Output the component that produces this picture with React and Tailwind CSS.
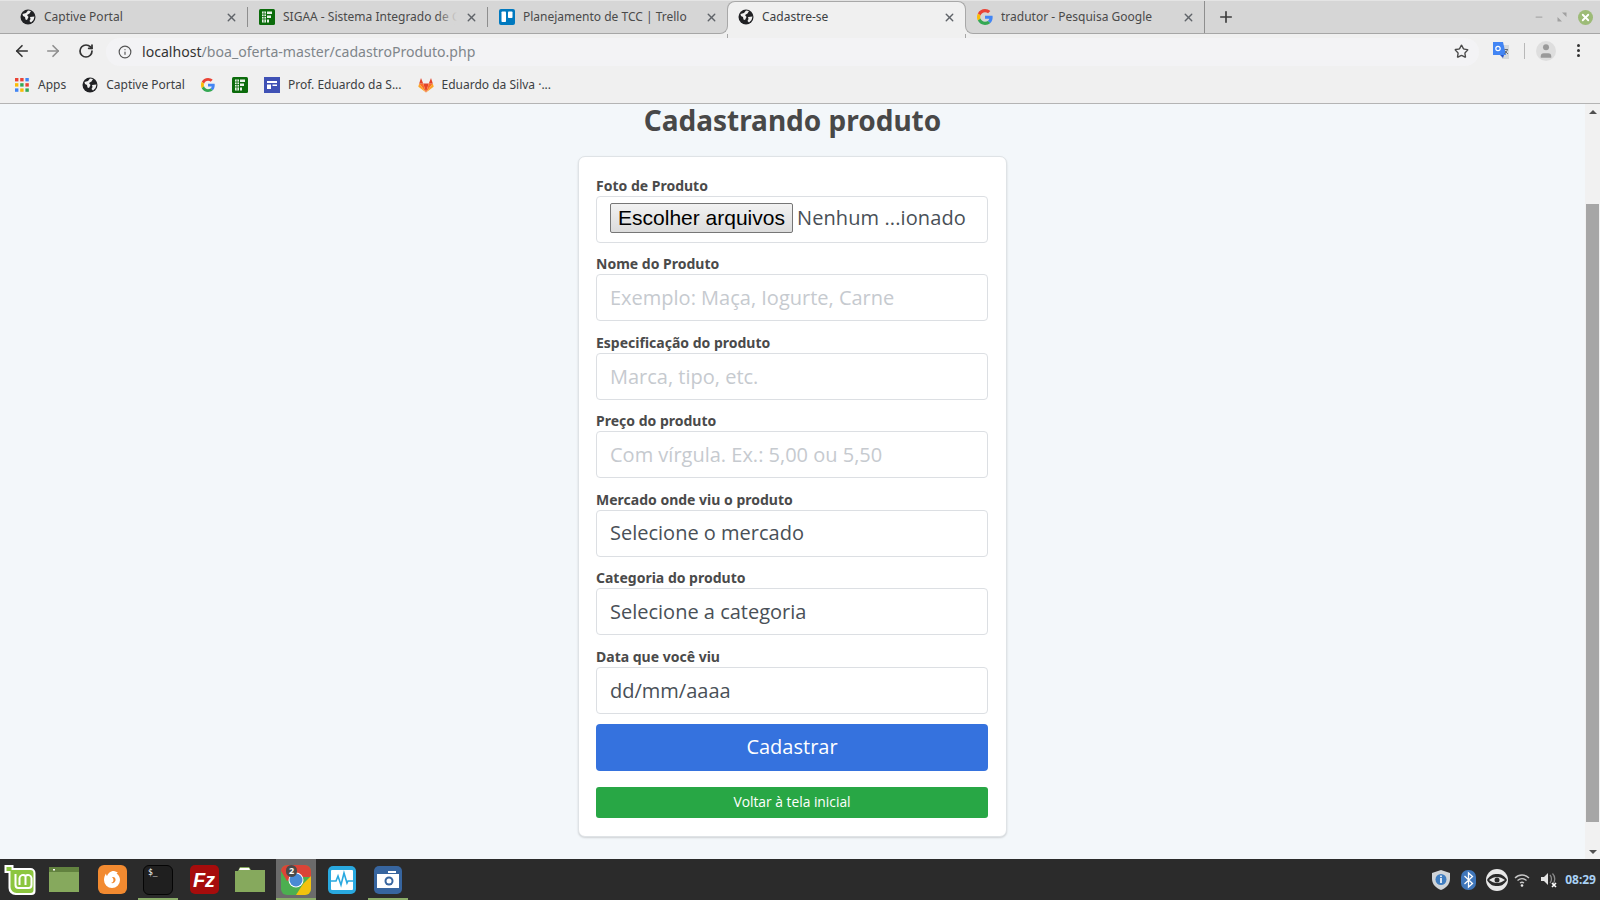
import { ArrowLeft, ArrowRight, RotateCw, Info, Star, Plus, X, Minus, User } from 'lucide-react';

const UI_FONT = 'font-["Noto_Sans",sans-serif]';

const GlobeIcon = () => (
    <svg width="16" height="16" viewBox="0 0 16 16" className="shrink-0">
        <circle cx="8" cy="8" r="7.5" fill="#202124" />
        <path d="M2.5 5 L6 4 L8 1.5 L11 2 L9.5 4.5 L7 6 L8.5 8 L7 11 L5.5 10.5 L5 8 L3 7 Z" fill="#f0f0f0" />
        <path d="M10 8 L14.5 7.5 L13.5 11 L11 13.5 L9.5 12 L10.5 10 Z" fill="#f0f0f0" />
    </svg>
);

const GoogleIcon = ({ size = 16 }) => (
    <svg width={size} height={size} viewBox="0 0 48 48" className="shrink-0">
        <path fill="#EA4335" d="M24 9.5c3.54 0 6.71 1.22 9.21 3.6l6.85-6.85C35.9 2.38 30.47 0 24 0 14.62 0 6.51 5.38 2.56 13.22l7.98 6.19C12.43 13.72 17.74 9.5 24 9.5z" />
        <path fill="#4285F4" d="M46.98 24.55c0-1.57-.15-3.09-.38-4.55H24v9.02h12.94c-.58 2.96-2.26 5.48-4.78 7.18l7.73 6c4.51-4.18 7.09-10.36 7.09-17.65z" />
        <path fill="#FBBC05" d="M10.53 28.59c-.48-1.45-.76-2.99-.76-4.59s.27-3.14.76-4.59l-7.98-6.19C.92 16.46 0 20.12 0 24c0 3.88.92 7.54 2.56 10.78l7.97-6.19z" />
        <path fill="#34A853" d="M24 48c6.48 0 11.93-2.13 16.08-5.81l-7.73-6c-2.15 1.45-4.92 2.3-8.35 2.3-6.26 0-11.57-4.22-13.47-9.91l-7.98 6.19C6.51 42.62 14.62 48 24 48z" />
    </svg>
);

const SigaaIcon = () => (
    <svg width="16" height="16" viewBox="0 0 16 16" className="shrink-0">
        <rect width="16" height="16" rx="1.5" fill="#0b6b0b" />
        <path d="M3 2.5h4v11H3zM8 2.5h5v2.5H8zM8 6.5h4v2.5H8zM8 10.5h2v3H8z" fill="#e8f2e8" />
        <path d="M3 5h4M3 7.5h4M3 10h4M5 2.5v11" stroke="#0b6b0b" strokeWidth="0.8" />
    </svg>
);

const TrelloIcon = () => (
    <svg width="16" height="16" viewBox="0 0 16 16" className="shrink-0">
        <rect width="16" height="16" rx="2" fill="#0079bf" />
        <rect x="2.5" y="2.5" width="4.5" height="10.5" rx="0.8" fill="#fff" />
        <rect x="9" y="2.5" width="4.5" height="6.5" rx="0.8" fill="#fff" />
    </svg>
);

const AppsIcon = () => (
    <svg width="14" height="14" viewBox="0 0 14 14" className="shrink-0">
        {[['#ea4335', '#ea4335', '#4285f4'], ['#fbbc05', '#34a853', '#ea4335'], ['#4285f4', '#fbbc05', '#34a853']].map((row, y) =>
            row.map((c, x) => <rect key={`${x}-${y}`} x={x * 5.2} y={y * 5.2} width="3.4" height="3.4" fill={c} />)
        )}
    </svg>
);

const ProfIcon = () => (
    <svg width="16" height="16" viewBox="0 0 16 16" className="shrink-0">
        <rect width="16" height="16" fill="#3f51b5" />
        <path d="M3 4h10v2H3zM3 7.5h4V12H3zM8.5 7.500H13V9H8.500z" fill="#fff" />
    </svg>
);

const GitlabIcon = () => (
    <svg width="16" height="16" viewBox="0 0 16 16" className="shrink-0">
        <path d="M8 15.5 L5.2 6.5 H10.8 Z" fill="#e24329" />
        <path d="M8 15.5 L5.2 6.5 H1.2 Z" fill="#fc6d26" />
        <path d="M8 15.5 L10.8 6.5 H14.8 Z" fill="#fc6d26" />
        <path d="M1.2 6.5 L0.4 9.2 C0.3 9.6 0.4 9.9 0.7 10.1 L8 15.5 Z" fill="#fca326" />
        <path d="M14.8 6.5 L15.6 9.2 C15.7 9.6 15.6 9.9 15.3 10.1 L8 15.5 Z" fill="#fca326" />
        <path d="M1.2 6.5 L3 1 L5.2 6.5 Z" fill="#e24329" />
        <path d="M14.8 6.5 L13 1 L10.8 6.5 Z" fill="#e24329" />
    </svg>
);

const tabs = [
    { title: 'Captive Portal', icon: <GlobeIcon /> },
    { title: 'SIGAA - Sistema Integrado de G', icon: <SigaaIcon />, fade: true },
    { title: 'Planejamento de TCC | Trello', icon: <TrelloIcon /> },
    { title: 'Cadastre-se', icon: <GlobeIcon />, active: true },
    { title: 'tradutor - Pesquisa Google', icon: <GoogleIcon /> },
];

function Tab({ tab, last, first }) {
    if (tab.active) {
        return (
            <div className="relative w-[239px] h-[37px] -mb-[4px] flex items-center pl-[10px] pr-[9px] bg-[#f0f0f0] border border-b-0 border-[#a8a8a8] rounded-t-lg z-10">
                <div className="absolute -left-[8px] bottom-[4px] w-[8px] h-[8px] bg-[#f0f0f0]">
                    <div className="w-full h-full bg-[#d6d6d6] border-r border-b border-[#a8a8a8] rounded-br-lg" />
                </div>
                <div className="absolute -right-[8px] bottom-[4px] w-[8px] h-[8px] bg-[#f0f0f0]">
                    <div className="w-full h-full bg-[#d6d6d6] border-l border-b border-[#a8a8a8] rounded-bl-lg" />
                </div>
                <div className="-mt-[5px] flex items-center gap-[8px] w-full">
                    {tab.icon}
                    <span className="flex-1 text-xs text-[#3c4043] truncate">{tab.title}</span>
                    <X size={13} strokeWidth={2.5} className="text-[#5f6368]" />
                </div>
            </div>
        );
    }
    return (
        <div className={`relative w-[239px] h-[32px] flex items-center ${first ? 'pl-[12px]' : 'pl-[11px]'} pr-[9px] gap-[8px] ${last ? 'border-r' : ''} border-[#8e8e8e]`}>
            {tab.icon}
            <div className="relative flex-1 min-w-0 overflow-hidden">
                <span className="block text-xs text-[#4a4a4a] whitespace-nowrap">{tab.title}</span>
                {tab.fade && <div className="absolute right-0 top-0 bottom-0 w-[20px] bg-gradient-to-r from-transparent to-[#d6d6d6]" />}
            </div>
            <X size={13} strokeWidth={2.5} className="text-[#5f6368] shrink-0" />
        </div>
    );
}

function TabStrip() {
    return (
        <div className="h-[34px] shrink-0 bg-[#d6d6d6] border-t border-t-[#e4e4e4] border-b border-b-[#a6a6a6] flex items-center pl-[8px]">
            {tabs.map((tab, i) => (
                <div key={tab.title} className="flex items-center">
                    <Tab tab={tab} first={i === 0} last={i === 4} />
                    {i < 2 && <div className="w-px h-[20px] bg-[#8e8e8e]" />}
                </div>
            ))}
            <Plus size={18} strokeWidth={2.2} className="ml-[12px] text-[#3c3c3c]" />
            <div className="ml-auto flex items-center pr-[7px]">
                <Minus size={10} strokeWidth={3} className="text-[#a9a9a9]" />
                <svg width="10" height="10" viewBox="0 0 10 10" className="ml-[13px]">
                    <path d="M5 0.5h4.5V5zM5 9.5H0.5V5z" fill="#a0a0a0" />
                </svg>
                <div className="ml-[11px] w-[15px] h-[15px] rounded-full bg-[#9dbb77] flex items-center justify-center">
                    <X size={11} strokeWidth={4} className="text-white" />
                </div>
            </div>
        </div>
    );
}

function Toolbar() {
    return (
        <div className="h-[33px] shrink-0 bg-[#f0f0f0] flex items-center">
            <ArrowLeft size={18} strokeWidth={2.2} className="ml-[13px] text-[#333]" />
            <ArrowRight size={18} strokeWidth={2.2} className="ml-[13px] text-[#8e8e8e]" />
            <RotateCw size={16} strokeWidth={2.6} className="ml-[16px] text-[#333]" />
            <div className="ml-[12px] w-[1373px] h-[28px] mt-[2px] rounded-full bg-[#f3f3f5] flex items-center pl-[12px] pr-[10px]">
                <Info size={14} strokeWidth={2} className="text-[#555]" />
                <span className="ml-[10px] text-[14.1px] text-[#333]">localhost<span className="text-[#80868b]">/boa_oferta-master/cadastroProduto.php</span></span>
                <Star size={15} strokeWidth={2.2} className="ml-auto text-[#4a4a4a]" />
            </div>
            <svg width="17" height="17" viewBox="0 0 17 17" className="ml-[14px]">
                <path d="M7 3h9v14H9z" fill="#d5d8db" />
                <path d="M0 0h10l3 13H0z" fill="#4285f4" />
                <path d="M7 13l3 3 1-3z" fill="#2a56c6" />
                <circle cx="5" cy="6.5" r="2.2" fill="none" stroke="#fff" strokeWidth="1.2" />
                <path d="M11.5 7.5h3.5M13 7v1M11.5 12l3-4M12 9l3 3" stroke="#5f6368" strokeWidth="0.9" />
            </svg>
            <div className="ml-[14px] w-px h-[16px] bg-[#b8b8b8]" />
            <div className="ml-[11px] w-[20px] h-[20px] rounded-full bg-[#dedede] overflow-hidden flex items-center justify-center text-[#9a9a9a]">
                <User size={18} fill="currentColor" strokeWidth={0} />
            </div>
            <div className="ml-[21px] flex flex-col gap-[2px]">
                <div className="w-[3px] h-[3px] rounded-full bg-[#333]" />
                <div className="w-[3px] h-[3px] rounded-full bg-[#333]" />
                <div className="w-[3px] h-[3px] rounded-full bg-[#333]" />
            </div>
        </div>
    );
}

function Bookmarks() {
    return (
        <div className="h-[37px] shrink-0 bg-[#f0f0f0] border-b border-b-[#b4b4b4] flex items-center pl-[15px] text-xs text-[#3c4043]">
            <AppsIcon />
            <span className="ml-[9px]">Apps</span>
            <div className="ml-[16px]"><GlobeIcon /></div>
            <span className="ml-[8px]">Captive Portal</span>
            <div className="ml-[16px]"><GoogleIcon size={14} /></div>
            <div className="ml-[17px]"><SigaaIcon /></div>
            <div className="ml-[16px]"><ProfIcon /></div>
            <span className="ml-[8px]">Prof. Eduardo da S...</span>
            <div className="ml-[16px]"><GitlabIcon /></div>
            <span className="ml-[8px]">Eduardo da Silva ·...</span>
        </div>
    );
}

const FORM_FONT = 'font-["Open_Sans",sans-serif]';
const inputClass = `block w-full h-[47px] px-[13px] bg-white border border-[#dcdfe3] rounded-[4px] text-[20px] text-[#495057] placeholder:text-[#c6cacf] outline-none appearance-none ${FORM_FONT}`;

function Field({ label, children }) {
    return (
        <div className="mb-[9.6px]">
            <label className="block h-[22px] leading-[24px] text-[14px] font-bold text-[#4a4a4a]">{label}</label>
            {children}
        </div>
    );
}

function ProductForm() {
    return (
        <div className="w-[429px] h-[681px] mt-[14px] bg-white border border-[#dfe3e6] rounded-[7px] shadow-[0_1px_2px_rgba(0,0,0,0.15)] pl-[17px] pr-[18px] pt-[16.5px]">
            <Field label="Foto de Produto">
                <div className={`${inputClass} flex items-center`}>
                    <button className='h-[30px] w-[183px] shrink-0 -mt-[2px] pb-[1px] bg-gradient-to-b from-[#f2f2f2] to-[#dcdcdc] border border-[#767676] rounded-[2px] text-[21px] leading-[24px] text-black font-["Liberation_Sans",sans-serif]'>Escolher arquivos</button>
                    <span className="ml-[4px] -mt-[2px] whitespace-nowrap tracking-[0.1px]">Nenhum ...ionado</span>
                </div>
            </Field>
            <Field label="Nome do Produto">
                <input className={inputClass} placeholder="Exemplo: Maça, Iogurte, Carne" readOnly />
            </Field>
            <Field label="Especificação do produto">
                <input className={inputClass} placeholder="Marca, tipo, etc." readOnly />
            </Field>
            <Field label="Preço do produto">
                <input className={inputClass} placeholder="Com vírgula. Ex.: 5,00 ou 5,50" readOnly />
            </Field>
            <Field label="Mercado onde viu o produto">
                <select className={inputClass}><option>Selecione o mercado</option></select>
            </Field>
            <Field label="Categoria do produto">
                <select className={inputClass}><option>Selecione a categoria</option></select>
            </Field>
            <Field label="Data que você viu">
                <input className={inputClass} value="dd/mm/aaaa" readOnly />
            </Field>
            <button className={`block w-full h-[47px] mt-[1px] bg-[#3572de] rounded-[4px] text-white text-[20px] ${FORM_FONT}`}>Cadastrar</button>
            <button className={`block w-full h-[31px] mt-[16px] bg-[#28a745] rounded-[3px] text-white text-[13.8px] ${FORM_FONT}`}>Voltar à tela inicial</button>
        </div>
    );
}

function Scrollbar() {
    return (
        <div className="w-[15px] shrink-0 bg-[#f1f1f1] flex flex-col items-center">
            <div className="mt-[6px] w-0 h-0 border-x-[4px] border-x-transparent border-b-[4px] border-b-[#505050]" />
            <div className="mt-[90px] w-[13px] h-[618px] bg-[#a6a6a6]" />
            <div className="mt-[28px] w-0 h-0 border-x-[4px] border-x-transparent border-t-[4px] border-t-[#505050]" />
        </div>
    );
}

// icones do painel
const Dock = ({ children, active, running, first, className = '' }) => (
    <div className={`relative h-[41px] flex items-center justify-center ${first ? 'w-[41px] -ml-[3px] justify-start' : 'w-[46px]'} ${className}`}>
        {active && <div className="absolute inset-y-0 left-[3px] right-[3px] bg-[#6b6b6b]" />}
        <div className="relative">{children}</div>
        {running && <div className="absolute bottom-0 left-[3px] right-[3px] h-[2px] bg-[#8aac68]" />}
    </div>
);

function Taskbar() {
    return (
        <div className="h-[41px] shrink-0 bg-[#2b2b2b] flex items-center">
            <div className="flex pl-[3px]">
                <Dock first>
                    <svg width="33" height="30" viewBox="0 0 32 30" className="ml-[4px]">
                        <path d="M0 0h9v3h17a5 5 0 0 1 5 5v18a4 4 0 0 1-4 4H11a7 7 0 0 1-7-7V8H0z" fill="#fff" />
                        <path d="M2 2h5v3h19a3 3 0 0 1 3 3v17a3 3 0 0 1-3 3H12a6 6 0 0 1-6-6V6H2z" fill="#8cc63f" />
                        <path d="M11 9v11a3 3 0 0 0 3 3h10a3 3 0 0 0 3-3v-7a3.500 3.500 0 0 0-6-2 3.500 3.500 0 0 0-6 2v7M21 11v9" fill="none" stroke="#fff" strokeWidth="2" />
                    </svg>
                </Dock>
                <Dock>
                    <svg width="30" height="25" viewBox="0 0 30 25">
                        <rect width="30" height="25" fill="#86a95d" />
                        <rect width="30" height="5" fill="#62823f" />
                        <rect x="4" y="2" width="2" height="1.5" fill="#fff" />
                    </svg>
                </Dock>
                <Dock className="ml-[2px]">
                    <svg width="29" height="29" viewBox="0 0 29 29">
                        <rect width="29" height="29" rx="6" fill="#f28a30" />
                        <path d="M14.500 6c2 0 4 .5 5.500 2-.500 0-1 0-1.500.5 2.500 1.500 3.500 4 3.500 6.500a8 8 0 0 1-16 0c0-3 1-5 2-6.500 0 1 .5 2 1 2.500 1-2.500 3-4.500 5.500-5z" fill="#fff" />
                        <path d="M14 12c2.500-.5 4 1.500 3.500 3.500-.5 2-2.500 3-4.500 2.500 1.500-.5 2.500-1.500 2.500-3 0-1-.5-2-1.500-3z" fill="#f28a30" />
                    </svg>
                </Dock>
                <Dock running>
                    <div className="w-[30px] h-[30px] rounded-[6px] bg-[#1f1f1f] border border-[#050505] pl-[4px] pt-[2px] text-[8px] leading-[10px] text-white font-['DejaVu_Sans_Mono',monospace]">$_</div>
                </Dock>
                <Dock>
                    <div className='w-[29px] h-[29px] rounded-[5px] bg-[#a60c0c] flex items-center justify-center text-white text-[20px] italic font-bold font-["Liberation_Sans",sans-serif]'>Fz</div>
                </Dock>
                <Dock>
                    <svg width="30" height="25" viewBox="0 0 30 25">
                        <path d="M0 4h3l2-4h9l2 3h14v22H0z" fill="#86a95d" />
                        <path d="M5 1h9l1 2H4z" fill="#fff" />
                    </svg>
                </Dock>
                <Dock active running>
                    <svg width="30" height="30" viewBox="0 0 30 30">
                        <rect width="30" height="30" rx="6" fill="#4caf50" />
                        <path d="M0 6a6 6 0 0 1 6-6h18a6 6 0 0 1 6 6v6H15L6 16z" fill="#db4437" />
                        <path d="M30 11v13a6 6 0 0 1-6 6h-9l7-11z" fill="#f4c20d" />
                        <circle cx="15" cy="15" r="7.5" fill="#fff" />
                        <circle cx="15" cy="15" r="6.5" fill="#4a8ad4" />
                    </svg>
                    <div className="absolute left-[5px] top-0 w-[11px] h-[12px] rounded-full bg-[#4a4a4a] text-[9px] leading-[12px] text-center text-white font-bold">2</div>
                </Dock>
                <Dock>
                    <svg width="28" height="28" viewBox="0 0 28 28">
                        <rect width="28" height="28" rx="5" fill="#29a9e0" />
                        <rect x="3" y="4" width="22" height="20" rx="1" fill="#fff" />
                        <path d="M3 15h5l2-5 3 9 3-12 3 10 1-2h5" fill="none" stroke="#29a9e0" strokeWidth="1.6" />
                    </svg>
                </Dock>
                <Dock running>
                    <svg width="28" height="28" viewBox="0 0 28 28">
                        <rect width="28" height="28" rx="5" fill="#37659f" />
                        <rect x="3" y="8" width="22" height="14" fill="#fff" />
                        <rect x="14" y="5" width="8" height="2" fill="#fff" />
                        <circle cx="15" cy="15" r="4.5" fill="#37659f" />
                        <circle cx="15" cy="15" r="2.5" fill="#fff" />
                    </svg>
                </Dock>
            </div>
            <div className="ml-auto flex items-center pr-[4px]">
                <svg width="18" height="20" viewBox="0 0 18 20">
                    <path d="M9 0l9 3v6c0 5-4 9-9 11-5-2-9-6-9-11V3z" fill="#cfd4d8" />
                    <circle cx="9" cy="9.5" r="5.5" fill="#3f7dc0" />
                    <rect x="8.2" y="8" width="1.6" height="5" fill="#fff" />
                    <rect x="8.2" y="5.5" width="1.6" height="1.6" fill="#fff" />
                </svg>
                <svg width="15" height="20" viewBox="0 0 15 20" className="ml-[11px]">
                    <rect width="15" height="20" rx="7" fill="#3f76ba" />
                    <path d="M3.5 6l8 7.5-4 3.5V3l4 3.5-8 7.5" fill="none" stroke="#fff" strokeWidth="1.3" />
                </svg>
                <svg width="22" height="22" viewBox="0 0 22 22" className="ml-[10px]">
                    <circle cx="11" cy="11" r="11" fill="#e8e8e8" />
                    <path d="M1 11c3-5 6-6 10-6s7 1 10 6c-3 5-6 6-10 6s-7-1-10-6z" fill="#2b2b2b" />
                    <path d="M3 11c3-2 5-3 8-3s5 1 8 3c-3 2-5 3-8 3s-5-1-8-3z" fill="#e8e8e8" />
                    <circle cx="11" cy="11" r="2.5" fill="#2b2b2b" />
                </svg>
                <svg width="16" height="14" viewBox="0 0 16 14" className="ml-[6px]">
                    <path d="M1 5c4-4 10-4 14 0M3.5 7.5c3-2.5 6-2.5 9 0M6 10c1.500-1 2.500-1 4 0" fill="none" stroke="#c8c8c8" strokeWidth="1.4" />
                    <circle cx="8" cy="12.500" r="1.300" fill="#e8e8e8" />
                </svg>
                <svg width="16" height="16" viewBox="0 0 16 16" className="ml-[11px]">
                    <path d="M0 5h3l4-4v12l-4-4H0z" fill="#e4e4e4" />
                    <path d="M9 3c2 2 2 6 0 8M11.500 1.500c3 3 3 8 0 11" fill="none" stroke="#8a8a8a" strokeWidth="1.300" />
                    <path d="M11 11l4 4M15 11l-4 4" stroke="#fff" strokeWidth="1.600" />
                </svg>
                <span className="ml-[8px] text-[12px] font-bold text-[#a9d1f5]">08:29</span>
            </div>
        </div>
    );
}

export default function App() {
    return (
        <div className={`w-[1600px] h-[900px] flex flex-col overflow-hidden ${UI_FONT}`}>
            <TabStrip />
            <Toolbar />
            <Bookmarks />
            <div className="flex-1 min-h-0 flex bg-[#f3f7fa]">
                <main className="flex-1 flex flex-col items-center">
                    <h1 className="h-[38px] leading-[32px] text-[28px] font-bold text-[#484848]">Cadastrando produto</h1>
                    <ProductForm />
                </main>
                <Scrollbar />
            </div>
            <Taskbar />
        </div>
    );
}
